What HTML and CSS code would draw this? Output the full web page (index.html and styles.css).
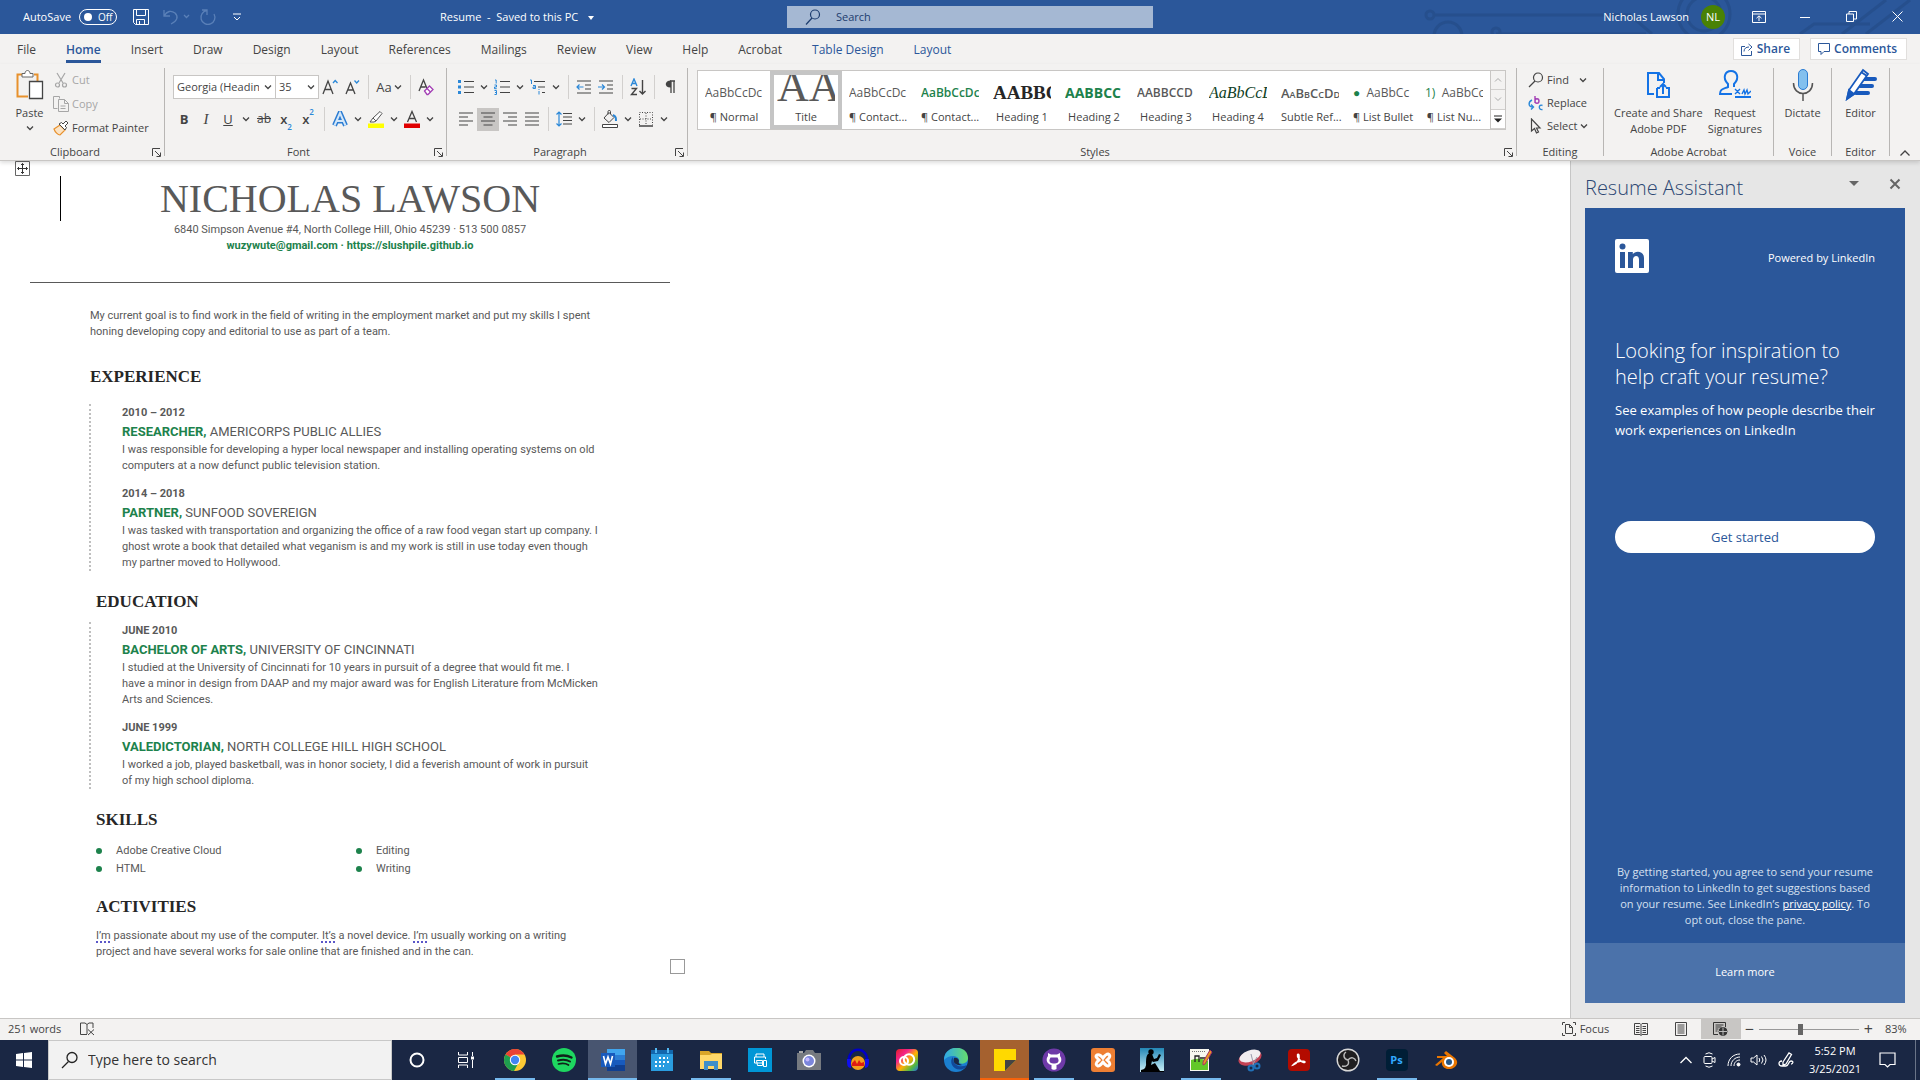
FILE: index.html
```html
<!DOCTYPE html>
<html lang="en">
<head>
<meta charset="utf-8">
<title>Resume - Word</title>
<link rel="stylesheet" href="styles.css">
</head>
<body>
<svg class="defs" aria-hidden="true">
  <symbol id="chev" viewBox="0 0 8 8"><path d="M1 2.500l3 3 3-3" fill="none" stroke="#444" stroke-width="1.300"/></symbol>
  <symbol id="launch" viewBox="0 0 9 9"><path d="M.5 8V.5H8M3 3l5 5M8.500 4.500v4h-4" fill="none" stroke="#444"/></symbol>
</svg>

<header class="titlebar">
  <svg class="circuit" viewBox="0 0 520 34" preserveAspectRatio="xMaxYMid slice" aria-hidden="true"><g fill="none" stroke="#244d88" stroke-width="3"><circle cx="30" cy="15" r="4"/><path d="M34 15h196l22 19M96 34h150M400 34l14-10h56M442 34l44-34M466 34l44-34"/><circle cx="48" cy="36" r="14"/><circle cx="96" cy="32" r="4"/><circle cx="304" cy="14" r="26"/><circle cx="304" cy="14" r="17"/></g></svg>
  <div class="tb-left">
    <label class="autosave">AutoSave <span class="toggle"><input type="checkbox"><span>Off</span></span></label>
    <button class="tbtn save" aria-label="Save"><svg width="18" height="18" viewBox="0 0 18 18" fill="none" stroke="#fff"><path d="M1.500 1.500h15v15h-13l-2-2zM4.500 1.500v6h9v-6M4.500 16.500v-5h8v5M7.500 13v3.500"/></svg></button>
    <button class="tbtn undo" aria-label="Undo"><svg width="28" height="18" viewBox="0 0 28 18" fill="none" stroke="#5a80b8" stroke-width="1.300"><path d="M2 2v6h6M2 8c3-5 7-6 11-3 4 4 2 8-4 11M22 7l2.500 2.500L27 7"/></svg></button>
    <button class="tbtn redo" aria-label="Repeat"><svg width="18" height="18" viewBox="0 0 18 18" fill="none" stroke="#5a80b8" stroke-width="1.300"><path d="M3 2h5v5M8 2.500A7 7 0 1 0 15 6"/></svg></button>
    <button class="tbtn more" aria-label="Customize Quick Access Toolbar"><svg width="8" height="8" viewBox="0 0 8 8" fill="none" stroke="#fff"><path d="M0 1h8M1 4l3 3 3-3"/></svg></button>
  </div>
  <button class="doc-name">Resume&nbsp; -&nbsp; Saved to this PC <span class="tri"></span></button>
  <div class="top-search">
    <svg width="18" height="18" viewBox="0 0 18 18" fill="none" stroke="#1d3c6e" stroke-width="1.200"><circle cx="11" cy="6.500" r="4.500"/><path d="M8 10l-6 6.500"/></svg>
    <input type="text" placeholder="Search" aria-label="Search">
  </div>
  <div class="tb-right">
    <span>Nicholas Lawson</span><span class="avatar">NL</span>
    <div class="win">
      <button aria-label="Ribbon display options"><svg width="14" height="12" viewBox="0 0 14 12" fill="none" stroke="#fff"><path d="M.5.5h13v11H.5zM.5 3h13M7 10V5M4.500 7.200L7 4.800l2.500 2.400"/></svg></button>
      <button aria-label="Minimize"><svg width="10" height="12" viewBox="0 0 10 12" stroke="#fff"><path d="M0 6.500h10"/></svg></button>
      <button aria-label="Restore"><svg width="11" height="11" viewBox="0 0 11 11" fill="none" stroke="#fff"><path d="M.5 3h7v7.500h-7zM3 3V.5h7.500V8h-3"/></svg></button>
      <button aria-label="Close"><svg width="11" height="11" viewBox="0 0 11 11" stroke="#fff"><path d="M.5.5l10 10M10.500.5l-10 10"/></svg></button>
    </div>
  </div>
</header>

<nav class="tabs">
  <button>File</button><button class="on">Home</button><button>Insert</button><button>Draw</button><button>Design</button><button>Layout</button><button>References</button><button>Mailings</button><button>Review</button><button>View</button><button>Help</button><button>Acrobat</button><button class="ctx">Table Design</button><button class="ctx">Layout</button>
  <div class="tab-actions">
    <button><svg width="12" height="13" viewBox="0 0 12 13" fill="none" stroke="#2b579a"><path d="M4 3.500H.5v9h10V8M3 8.500c0-3 2-4.500 5-4.500M7.500 1l3.500 3-3.500 3.500"/></svg>Share</button>
    <button><svg width="12" height="12" viewBox="0 0 12 12" fill="none" stroke="#2b579a"><path d="M.5.5h11v8H6l-3 3v-3H.5z"/></svg>Comments</button>
  </div>
</nav>

<section class="ribbon" aria-label="Ribbon">
  <div class="group g-clip">
    <div class="body">
      <button class="big"><svg width="30" height="32" viewBox="0 0 30 32"><path d="M7 5.500H2.500v22H13M19 5.500h3.500V12" fill="none" stroke="#e8912d" stroke-width="2"/><path d="M7 8V4.500h3C10 .5 15 .5 15 4.500h3V8z" fill="#fff" stroke="#666"/><path d="M14.500 12.500h13v17h-13z" fill="#fff" stroke="#444" stroke-width="1.300"/></svg><span>Paste</span><svg width="8" height="8"><use href="#chev"/></svg></button>
      <div class="list">
        <button class="off"><svg width="16" height="16" viewBox="0 0 16 16" fill="none" stroke="#a6a6a6" stroke-width="1.200"><path d="M4 1l6 10M12 1L6 11"/><circle cx="4.500" cy="13" r="2"/><circle cx="11.500" cy="13" r="2"/></svg>Cut</button>
        <button class="off"><svg width="16" height="16" viewBox="0 0 16 16" fill="none" stroke="#a6a6a6"><path d="M4.500 12.500h-4V.5h6v2M5.500 3.500h6l4 4v8h-10zM11.500 3.500v4h4M7.500 10h5M7.500 12.500h5"/></svg>Copy</button>
        <button><svg width="16" height="16" viewBox="0 0 16 16"><path d="M1 9l6-4 5 5-5 5c-2 0-5-3-6-6z" fill="#fbe3c4" stroke="#e8912d" stroke-width="1.200"/><path d="M6 4l6 6 1.500-2.500L12 6l3-3-2-2-3 3-1.500-1.500z" fill="#fff" stroke="#444"/></svg>Format Painter</button>
      </div>
    </div>
    <footer>Clipboard<svg width="9" height="9"><use href="#launch"/></svg></footer>
  </div>

  <div class="group g-font">
    <div class="rows">
      <div class="row">
        <span class="combo face"><select aria-label="Font"><option>Georgia (Headings)</option></select><svg width="8" height="8"><use href="#chev"/></svg></span>
        <span class="combo size"><select aria-label="Font size"><option>35</option></select><svg width="8" height="8"><use href="#chev"/></svg></span>
        <button class="ib" aria-label="Increase font size"><svg width="16" height="18" viewBox="0 0 16 18" fill="none" stroke="#444" stroke-width="1.300"><path d="M1 16L6 3l5 13M2.800 11.500h6.400"/><path d="M11 5l2.200-2.500L15.500 5" stroke="#2b88d8"/></svg></button>
        <button class="ib" aria-label="Decrease font size"><svg width="16" height="18" viewBox="0 0 16 18" fill="none" stroke="#444" stroke-width="1.300"><path d="M2 16L6.500 5 11 16M3.500 12h6"/><path d="M10.500 2.500L12.700 5 15 2.500" stroke="#2b88d8"/></svg></button>
        <i class="sep"></i>
        <button class="ib case">Aa<svg width="8" height="8"><use href="#chev"/></svg></button>
        <i class="sep"></i>
        <button class="ib" aria-label="Clear formatting"><svg width="16" height="18" viewBox="0 0 16 18" fill="none" stroke="#444" stroke-width="1.300"><path d="M1 13L5.500 2 10 13M2.500 9h5"/><path d="M6.500 13l5-5 3.500 3.500-5 5H9z" fill="#fff" stroke="#a33fb5"/><path d="M9 10.500l3.500 3.500" stroke="#a33fb5"/></svg></button>
      </div>
      <div class="row">
        <button class="ib b">B</button><button class="ib it">I</button><button class="ib u">U</button><button class="cv" aria-label="Underline style"><svg width="8" height="8"><use href="#chev"/></svg></button>
        <button class="ib st">ab</button><button class="ib xx">x<sub>2</sub></button><button class="ib xx">x<sup>2</sup></button>
        <i class="sep"></i>
        <button class="ib" aria-label="Text effects"><svg width="16" height="16" viewBox="0 0 16 16"><path d="M2.500 14.500L8 2l5.500 12.500M4.500 10h7" fill="none" stroke="#2b7cd3" stroke-width="5"/><path d="M2.500 14.500L8 2l5.500 12.500M4.500 10h7" fill="none" stroke="#d4e7f8" stroke-width="2"/></svg></button><button class="cv" aria-label="Text effects menu"><svg width="8" height="8"><use href="#chev"/></svg></button>
        <button class="ib" aria-label="Highlight"><svg width="18" height="18" viewBox="0 0 18 18"><path d="M6 8l7-6.500 2 2L9 11zM6 8l-3 4h4l2-1" fill="#fff" stroke="#555"/><path d="M1 13.500h16V18H1z" fill="#ff0"/></svg></button><button class="cv" aria-label="Highlight colors"><svg width="8" height="8"><use href="#chev"/></svg></button>
        <button class="ib" aria-label="Font color"><svg width="18" height="18" viewBox="0 0 18 18"><path d="M4.500 12L9 1.500 13.500 12M6 8.500h6" fill="none" stroke="#444" stroke-width="1.300"/><path d="M1 13.500h16V18H1z" fill="#e00000"/></svg></button><button class="cv" aria-label="Font colors"><svg width="8" height="8"><use href="#chev"/></svg></button>
      </div>
    </div>
    <footer>Font<svg width="9" height="9"><use href="#launch"/></svg></footer>
  </div>

  <div class="group g-para">
    <div class="rows">
      <div class="row">
        <button class="ib" aria-label="Bullets"><svg width="16" height="16" viewBox="0 0 16 16"><path d="M6 2.500h10M6 8h10M6 13.500h10" stroke="#444" stroke-width="1.200"/><path d="M0 1h3v3H0zM0 6.500h3v3H0zM0 12h3v3H0z" fill="#2b88d8"/></svg></button><button class="cv" aria-label="Bullet library"><svg width="8" height="8"><use href="#chev"/></svg></button>
        <button class="ib" aria-label="Numbering"><svg width="16" height="16" viewBox="0 0 16 16" fill="none"><path d="M6 2.500h10M6 8h10M6 13.500h10" stroke="#444" stroke-width="1.200"/><path d="M1 1h1.200v3.500M.5 6h2v2h-2v1.700h2.200M.5 11.500h2v4h-2M1 13.500h1.500" stroke="#2b88d8"/></svg></button><button class="cv" aria-label="Numbering library"><svg width="8" height="8"><use href="#chev"/></svg></button>
        <button class="ib" aria-label="Multilevel list"><svg width="16" height="16" viewBox="0 0 16 16" fill="none"><path d="M4 2.500h11M8 8h7M12 13.500h3" stroke="#444" stroke-width="1.200"/><path d="M0 1h1.500v4M3 6.500h2.500v3H3v-1.500h2.500M9 12v3.500M9 10v1" stroke="#2b88d8"/></svg></button><button class="cv" aria-label="Multilevel library"><svg width="8" height="8"><use href="#chev"/></svg></button>
        <i class="sep"></i>
        <button class="ib" aria-label="Decrease indent"><svg width="16" height="14" viewBox="0 0 16 14" fill="none" stroke="#444" stroke-width="1.200"><path d="M1 1h14M9 5h6M9 9h6M1 13h14"/><path d="M7.500 7H1M3.500 4.500L1 7l2.500 2.500" stroke="#2b88d8"/></svg></button>
        <button class="ib" aria-label="Increase indent"><svg width="16" height="14" viewBox="0 0 16 14" fill="none" stroke="#444" stroke-width="1.200"><path d="M1 1h14M9 5h6M9 9h6M1 13h14"/><path d="M0 7h6.500M4 4.500L6.500 7 4 9.500" stroke="#2b88d8"/></svg></button>
        <i class="sep"></i>
        <button class="ib" aria-label="Sort"><svg width="16" height="18" viewBox="0 0 16 18" fill="none" stroke-width="1.400"><path d="M1 8l3-7 3 7M2 5.500h4" stroke="#2b88d8"/><path d="M1.500 10.500h5l-5 6H7M12.500 2v14M9.500 13l3 3 3-3" stroke="#444"/></svg></button>
        <i class="sep"></i>
        <button class="ib" aria-label="Show marks"><svg width="12" height="14" viewBox="0 0 12 14"><path d="M6 1h5M7 1v12M10 1v12" stroke="#444" stroke-width="1.300"/><path d="M7 .5v7C0 8 0 .5 7 .5z" fill="#444"/></svg></button>
      </div>
      <div class="row">
        <button class="ib" aria-label="Align left"><svg width="14" height="14" viewBox="0 0 14 14" stroke="#444" stroke-width="1.200"><path d="M0 1h14M0 5h9M0 9h14M0 13h9"/></svg></button>
        <button class="ib sel" aria-label="Center"><svg width="14" height="14" viewBox="0 0 14 14" stroke="#444" stroke-width="1.200"><path d="M0 1h14M2.500 5h9M0 9h14M2.500 13h9"/></svg></button>
        <button class="ib" aria-label="Align right"><svg width="14" height="14" viewBox="0 0 14 14" stroke="#444" stroke-width="1.200"><path d="M0 1h14M5 5h9M0 9h14M5 13h9"/></svg></button>
        <button class="ib" aria-label="Justify"><svg width="14" height="14" viewBox="0 0 14 14" stroke="#444" stroke-width="1.200"><path d="M0 1h14M0 5h14M0 9h14M0 13h14"/></svg></button>
        <i class="sep"></i>
        <button class="ib" aria-label="Line spacing"><svg width="16" height="16" viewBox="0 0 16 16" fill="none" stroke="#444" stroke-width="1.200"><path d="M7 2.500h9M7 6h9M7 9.500h9M7 13h9"/><path d="M3 1v14M.5 3.500L3 1l2.500 2.500M.5 12.500L3 15l2.500-2.500" stroke="#2b88d8"/></svg></button><button class="cv" aria-label="Line spacing menu"><svg width="8" height="8"><use href="#chev"/></svg></button>
        <i class="sep"></i>
        <button class="ib" aria-label="Shading"><svg width="18" height="18" viewBox="0 0 18 18" fill="none" stroke="#444"><path d="M3 8l5-5.500 5 5-5 5zM7 4.500V1.500c0-1.500 2.500-1.500 2.500 0V4"/><path d="M12 5c3 1 3 3 3 6" stroke="#2b88d8" stroke-width="2"/><path d="M1.500 14.500h15v3h-15z" fill="#fff"/></svg></button><button class="cv" aria-label="Shading colors"><svg width="8" height="8"><use href="#chev"/></svg></button>
        <button class="ib" aria-label="Borders"><svg width="16" height="16" viewBox="0 0 16 16" fill="none" stroke="#444"><path d="M1.500 14V1.500h13V14M8 2v12M2 8h12" stroke-dasharray="1 1.500"/><path d="M1 15h14" stroke-width="1.500"/></svg></button><button class="cv" aria-label="Border menu"><svg width="8" height="8"><use href="#chev"/></svg></button>
      </div>
    </div>
    <footer>Paragraph<svg width="9" height="9"><use href="#launch"/></svg></footer>
  </div>

  <div class="group g-styles">
    <div class="gallery">
      <button><b class="s-n">AaBbCcDc</b><span>¶ Normal</span></button>
      <button class="cur"><b class="s-t">AA</b><span>Title</span></button>
      <button><b class="s-n">AaBbCcDc</b><span>¶ Contact...</span></button>
      <button><b class="s-g">AaBbCcDc</b><span>¶ Contact...</span></button>
      <button><b class="s-h1">AABBC</b><span>Heading 1</span></button>
      <button><b class="s-h2">AABBCC</b><span>Heading 2</span></button>
      <button><b class="s-h3">AABBCCD</b><span>Heading 3</span></button>
      <button><b class="s-h4">AaBbCcL</b><span>Heading 4</span></button>
      <button><b class="s-sr">AaBbCcDd</b><span>Subtle Ref...</span></button>
      <button><b class="s-n"><em>●</em>&nbsp; AaBbCc</b><span>¶ List Bullet</span></button>
      <button><b class="s-n"><em>1)</em>&nbsp; AaBbCc</b><span>¶ List Nu...</span></button>
      <div class="gscroll">
        <button aria-label="Row up" class="dim"><svg width="8" height="8" viewBox="0 0 8 8"><path d="M1 5.500l3-3 3 3" fill="none" stroke="#aaa"/></svg></button>
        <button aria-label="Row down" class="dim"><svg width="8" height="8" viewBox="0 0 8 8"><path d="M1 2.500l3 3 3-3" fill="none" stroke="#aaa"/></svg></button>
        <button aria-label="More styles"><svg width="8" height="8" viewBox="0 0 8 8"><path d="M0 1h8" stroke="#222"/><path d="M0 3.500h8L4 7.500z" fill="#222"/></svg></button>
      </div>
    </div>
    <footer>Styles<svg width="9" height="9"><use href="#launch"/></svg></footer>
  </div>

  <div class="group g-edit">
    <div class="list">
      <button><svg width="16" height="16" viewBox="0 0 16 16" fill="none" stroke="#444" stroke-width="1.200"><circle cx="10" cy="5.500" r="4.500"/><path d="M7 9l-6 6"/></svg>Find<svg class="far" width="8" height="8"><use href="#chev"/></svg></button>
      <button><svg width="16" height="16" viewBox="0 0 16 16" fill="none" stroke-width="1.400"><path d="M7 1v7M7 6c0-3 4-3 4 0s-4 3-4 0" stroke="#a33fb5"/><path d="M14.500 10.500c-4-2-4.500 5 0 4M4 5c-4 2-4 7 1 7M3 9.500L5.500 12 3 14.500" stroke="#2b88d8"/></svg>Replace</button>
      <button><svg width="16" height="16" viewBox="0 0 16 16"><path d="M3.500 1v12l3-2.500L8.500 15l2-1-2-4H12z" fill="none" stroke="#444" stroke-width="1.200"/></svg>Select<svg width="8" height="8"><use href="#chev"/></svg></button>
    </div>
    <footer>Editing</footer>
  </div>

  <div class="group g-acro">
    <div class="body">
      <button class="big"><svg width="30" height="32" viewBox="0 0 30 32" fill="none" stroke="#1473e6" stroke-width="2"><path d="M11 25H5V4h11l5 6v4M15 4v7h6M14 19v9h12v-9h-3M14 19h3M20 25v-10M17 18l3-3 3 3"/></svg><span>Create and Share<br>Adobe PDF</span></button>
      <button class="big"><svg width="32" height="32" viewBox="0 0 32 32" fill="none" stroke="#1473e6" stroke-width="2"><path d="M13 25H1c0-5 3-5 8-7v-3C3 9 6 2 12 2s9 7 3 13v3M16 28h16"/><path d="M16 20l5 5M21 20l-5 5M23 25l2-4 1 4 2-4 1 4 3-3" stroke-width="1.400"/></svg><span>Request<br>Signatures</span></button>
    </div>
    <footer>Adobe Acrobat</footer>
  </div>
  <div class="group g-one">
    <div class="body"><button class="big"><svg width="22" height="34" viewBox="0 0 22 34" fill="none"><rect x="6.500" y="1.500" width="9" height="20" rx="4.500" fill="#83c0ee" stroke="#2b7cd3"/><path d="M1.500 15c0 14 19 14 19 0M11 26v7" stroke="#555" stroke-width="1.500"/></svg><span>Dictate</span></button></div>
    <footer>Voice</footer>
  </div>
  <div class="group g-one">
    <div class="body"><button class="big"><svg width="32" height="34" viewBox="0 0 32 34"><path d="M18 11h12M15 18h12M11 25h12" stroke="#185abd" stroke-width="4" stroke-linecap="round"/><path d="M2 31l2-9L18 2l5 4L9 26z" fill="#fff" stroke="#185abd" stroke-width="1.800"/><path d="M2 31l2-9 5 4zM16 4l6 4" fill="#185abd" stroke="#185abd" stroke-width="1.800"/></svg><span>Editor</span></button></div>
    <footer>Editor</footer>
  </div>
  <button class="collapse" aria-label="Collapse the ribbon"><svg width="10" height="8" viewBox="0 0 10 8"><path d="M.5 6.500L5 2l4.500 4.500" fill="none" stroke="#444" stroke-width="1.300"/></svg></button>
</section>

<main class="work">
  <article class="doc">
    <svg class="move" width="15" height="15" viewBox="0 0 15 15" fill="none" stroke="#666"><path d="M.5.5h14v14H.5z" fill="#fff"/><path d="M7.500 2.500v10M2.500 7.500h10M6 4l1.500-1.500L9 4M6 11l1.500 1.500L9 11M4 6L2.500 7.500 4 9M11 6l1.500 1.500L11 9" stroke="#333"/></svg>
    <i class="cursor"></i>
    <div class="sheet">
      <header>
        <h1>NICHOLAS LAWSON</h1>
        <p>6840 Simpson Avenue #4, North College Hill, Ohio 45239 · 513 500 0857</p>
        <p class="mail">wuzywute@gmail.com · https://slushpile.github.io</p>
      </header>
      <p class="goal">My current goal is to find work in the field of writing in the employment market and put my skills I spent<br>honing developing copy and editorial to use as part of a team.</p>
      <h2 class="exp">EXPERIENCE</h2>
      <div class="line">
        <section><h4>2010 – 2012</h4><h3><b>RESEARCHER,</b> AMERICORPS PUBLIC ALLIES</h3><p>I was responsible for developing a hyper local newspaper and installing operating systems on old<br>computers at a now defunct public television station.</p></section>
        <section><h4>2014 – 2018</h4><h3><b>PARTNER,</b> SUNFOOD SOVEREIGN</h3><p>I was tasked with transportation and organizing the office of a raw food vegan start up company. I<br>ghost wrote a book that detailed what veganism is and my work is still in use today even though<br>my partner moved to Hollywood.</p></section>
      </div>
      <h2>EDUCATION</h2>
      <div class="line edu">
        <section><h4>JUNE 2010</h4><h3><b>BACHELOR OF ARTS,</b> UNIVERSITY OF CINCINNATI</h3><p>I studied at the University of Cincinnati for 10 years in pursuit of a degree that would fit me. I<br>have a minor in design from DAAP and my major award was for English Literature from McMicken<br>Arts and Sciences.</p></section>
        <section><h4>JUNE 1999</h4><h3><b>VALEDICTORIAN,</b> NORTH COLLEGE HILL HIGH SCHOOL</h3><p>I worked a job, played basketball, was in honor society, I did a feverish amount of work in pursuit<br>of my high school diploma.</p></section>
      </div>
      <h2>SKILLS</h2>
      <ul><li>Adobe Creative Cloud</li><li>Editing</li><li>HTML</li><li>Writing</li></ul>
      <h2 class="act">ACTIVITIES</h2>
      <p class="about"><u>I’m</u> passionate about my use of the computer. <u>It’s</u> a novel device. <u>I’m</u> usually working on a writing<br>project and have several works for sale online that are finished and in the can.</p>
      <i class="grip"></i>
    </div>
  </article>
  <aside class="pane">
    <div class="pane-head"><h2>Resume Assistant</h2><button aria-label="Pane options"><span class="tri"></span></button><button aria-label="Close pane"><svg width="12" height="12" viewBox="0 0 12 12" stroke="#666" stroke-width="2"><path d="M1.500 1.500l9 9M10.500 1.500l-9 9"/></svg></button></div>
    <div class="card">
      <div class="brand"><svg width="34" height="34" viewBox="0 0 34 34" aria-label="LinkedIn"><rect width="34" height="34" rx="2" fill="#fff"/><g fill="#2b579a"><circle cx="7.500" cy="7.500" r="3"/><path d="M5 13h5v16H5zM13 13h4.800v2.200c2-3.700 11.200-4 11.200 4V29h-5v-8.500c0-5-6-4.500-6 0V29h-5z"/></g></svg><span>Powered by LinkedIn</span></div>
      <h3>Looking for inspiration to help craft your resume?</h3>
      <p class="lead">See examples of how people describe their work experiences on LinkedIn</p>
      <button class="start">Get started</button>
      <p class="terms">By getting started, you agree to send your resume information to LinkedIn to get suggestions based on your resume. See LinkedIn’s <a href="#">privacy policy</a>. To opt out, close the pane.</p>
      <button class="learn">Learn more</button>
    </div>
  </aside>
</main>

<div class="status">
  <span>251 words</span>
  <svg width="15" height="14" viewBox="0 0 15 14" fill="none" stroke="#444"><path d="M7 12.500H.5V1H5l2 1.500V12M7 2.500L9 1h4v5M8 7.500l6 5.500M14 7.500L8 13"/></svg>
  <div class="views">
    <button class="focus"><svg width="14" height="14" viewBox="0 0 14 14" fill="none" stroke="#444"><path d="M3 .5H.5V3M11 .5h2.500V3M.5 11v2.500H3M13.500 11v2.500H11M3.500 2.500h4l3 3v6h-7zM7.500 2.500v3h3"/></svg>Focus</button>
    <button aria-label="Read mode"><svg width="14" height="13" viewBox="0 0 14 13" fill="none" stroke="#444"><path d="M.5.5H6l1 1 1-1h5.500v11H8l-1 1-1-1H.5zM7 1.500v11M2 3.500h3.500M2 5.500h3.500M2 7.500h3.500M2 9.500h3.500M8.500 3.500H12M8.500 5.500H12M8.500 7.500H12M8.500 9.500H12"/></svg></button>
    <button aria-label="Print layout"><svg width="12" height="14" viewBox="0 0 12 14" fill="none" stroke="#444"><path d="M.5.5h11v13H.5zM2.500 3h7M2.500 5h7M2.500 7h7M2.500 9h7M2.500 11h7"/></svg></button>
    <button class="sel" aria-label="Web layout"><svg width="15" height="14" viewBox="0 0 15 14" fill="none" stroke="#333"><path d="M5 12.500H.5V.5h12V5M2.500 3h8M2.500 5h6M2.500 7h3M2.500 9h2"/><circle cx="10" cy="9.500" r="4" fill="#333"/><path d="M6 9.500h8M10 5.500v8" stroke="#bbb"/></svg></button>
    <span class="zoom"><span>−</span><input type="range" min="10" max="230" value="101" aria-label="Zoom"><span>+</span></span>
    <span class="pct">83%</span>
  </div>
</div>

<div class="taskbar">
  <button class="startbtn" aria-label="Start"><svg width="16" height="16" viewBox="0 0 16 16" fill="#fff"><path d="M0 2l7-1v6.500H0zM8 .9L16 0v7.500H8zM0 8.500h7V15l-7-1zM8 8.500h8V16l-8-1z"/></svg></button>
  <div class="tsearch"><svg width="18" height="18" viewBox="0 0 18 18" fill="none" stroke="#222" stroke-width="1.300"><circle cx="11" cy="6.500" r="5"/><path d="M7.500 10.500L1 17"/></svg><input type="text" placeholder="Type here to search" aria-label="Type here to search"></div>
  <div class="apps">
    <button aria-label="Cortana"><svg width="24" height="24" viewBox="0 0 24 24"><circle cx="12" cy="12" r="6.500" fill="none" stroke="#fff" stroke-width="2"/></svg></button>
    <button aria-label="Task view"><svg width="24" height="24" viewBox="0 0 24 24" fill="none" stroke="#fff"><path d="M4.500 4v3h9V4M4.500 20v-3h9v3M4.500 9.500h9v5h-9zM18.500 4v4M18.500 12v8"/><path d="M17 8.500h3v3h-3z" fill="#fff" stroke="none"/></svg></button>
    <button class="run" aria-label="Chrome"><svg width="24" height="24" viewBox="0 0 24 24"><circle cx="12" cy="12" r="11" fill="#fcc934"/><path d="M12 12L2.500 6.500A11 11 0 0 1 21.500 6.500H12z" fill="#ea4335"/><path d="M2.500 6.500A11 11 0 0 0 11 23l5-9-4-2z" fill="#1e9e4f"/><circle cx="12" cy="12" r="5.200" fill="#fff"/><circle cx="12" cy="12" r="4.200" fill="#4285f4"/></svg></button>
    <button aria-label="Spotify"><svg width="24" height="24" viewBox="0 0 24 24" fill="none" stroke="#10231a" stroke-linecap="round"><circle cx="12" cy="12" r="12" fill="#1ed760" stroke="none"/><path d="M5 8.500q8-2.500 14.500 1" stroke-width="2.400"/><path d="M6 12.500q7-2 12 1" stroke-width="2"/><path d="M6.500 16q6-1.500 10 1" stroke-width="1.700"/></svg></button>
    <button class="active" aria-label="Word"><svg width="24" height="24" viewBox="0 0 24 24"><path d="M6 1h18v6H6z" fill="#41a5ee"/><path d="M6 7h18v5H6z" fill="#2b7cd3"/><path d="M6 12h18v5H6z" fill="#185abd"/><path d="M6 17h18v6H6z" fill="#103f91"/><path d="M0 5h14v14H0z" fill="#185abd"/><path d="M2.500 8l2 8L7 9l2.500 7 2-8" fill="none" stroke="#fff" stroke-width="1.600"/></svg></button>
    <button aria-label="Calendar"><svg width="24" height="24" viewBox="0 0 24 24"><path d="M1 2h22v21H1z" fill="#2a9de0"/><path d="M1 2h22v4H1z" fill="#1267ad"/><path d="M5 0h2v5H5zM17 0h2v5h-2z" fill="#52b7f2"/><path d="M9 10h9M5 14h14M5 18h9" stroke="#fff" stroke-width="2" stroke-dasharray="2 2"/></svg></button>
    <button class="run" aria-label="File Explorer"><svg width="24" height="24" viewBox="0 0 24 24"><path d="M1 3h9l2 2h11v6H1z" fill="#d9a528"/><path d="M1 7h10l2-1h10v15H1z" fill="#ffd869"/><path d="M5 13h14v9h-4v-4H9v4H5z" fill="#3f8fc9"/></svg></button>
    <button aria-label="Printer"><svg width="24" height="24" viewBox="0 0 24 24" fill="none" stroke="#fff"><path d="M0 0h24v24H0z" fill="#0096d6" stroke="none"/><path d="M8 9V6h8v3M14 15H6.500V9h11v2M8.500 12.500h6v5h-5zM15.500 12.500h3v6h-3z"/></svg></button>
    <button aria-label="Camera"><svg width="24" height="24" viewBox="0 0 24 24"><path d="M0 5h7l2-3h7l2 3h6v17H0z" fill="#767a80"/><path d="M2 3h4v2H2z" fill="#aaa"/><circle cx="12" cy="13" r="6.500" fill="#fff"/><circle cx="12" cy="13" r="5" fill="#7b86dc"/><circle cx="10.500" cy="11.500" r="2" fill="#c4b7ff"/></svg></button>
    <button aria-label="Audacity"><svg width="24" height="24" viewBox="0 0 24 24"><circle cx="12" cy="15" r="7" fill="#f2a01d"/><path d="M6 15l3-3 2 4 2-4 2 3 3-1v4H6z" fill="#df1c12"/><path d="M3 16C0-3 24-3 21 16" fill="none" stroke="#0000c8" stroke-width="2.500"/><path d="M1 11h4v9c-4 0-4-4-4-9zM23 11h-4v9c4 0 4-4 4-9z" fill="#1010ee"/></svg></button>
    <button aria-label="Creative Cloud"><svg width="24" height="24" viewBox="0 0 24 24" fill="none"><defs><linearGradient id="cc" x1="0" y1="0" x2="1" y2="1"><stop stop-color="#e21f27"/><stop offset=".3" stop-color="#f4248c"/><stop offset=".55" stop-color="#ffb400"/><stop offset=".8" stop-color="#4bb749"/><stop offset="1" stop-color="#2b6de8"/></linearGradient></defs><rect x="1" y="1" width="22" height="22" rx="4" fill="url(#cc)"/><circle cx="9" cy="13" r="4" stroke="#fff" stroke-width="2"/><circle cx="14" cy="11.500" r="5.200" stroke="#fff" stroke-width="2"/></svg></button>
    <button aria-label="Edge"><svg width="24" height="24" viewBox="0 0 24 24"><defs><linearGradient id="eg"><stop stop-color="#2fa8e8"/><stop offset="1" stop-color="#66dc6c"/></linearGradient></defs><circle cx="12" cy="12" r="12" fill="#1b7fd0"/><path d="M0 12C0-4 24-4 24 10c0 6-8 7-9 4 2-6-9-9-15-2z" fill="url(#eg)"/><path d="M9 9c-5 5 1 15 10 12 2-1 3-2 4-4-6 3-15 1-14-8z" fill="#11489a"/><path d="M10 10c-2 5 3 8 8 7-3-1-4-2-3-4 0-3-4-4-5-3z" fill="#1b2745"/></svg></button>
    <button class="alert" aria-label="Sticky Notes"><svg width="24" height="24" viewBox="0 0 24 24"><path d="M1 1h22v11L12 23H1z" fill="#ffd900"/><path d="M12 12h11L12 23z" fill="#444"/></svg></button>
    <button class="run" aria-label="GitHub Desktop"><svg width="24" height="24" viewBox="0 0 24 24"><circle cx="12" cy="12" r="11.500" fill="#6e3aa8"/><path d="M9.500 21v-4c-5-1-6-6-3.500-9V5l3 1.500h6L18 5v3c2.500 3 1.500 8-3.500 9v4c-1 1-4 1-5 0z" fill="#fff"/><path d="M8.500 9.500h7c3 5-1 6-3.500 6s-6.500-1-3.500-6z" fill="#6e3aa8"/></svg></button>
    <button aria-label="XAMPP"><svg width="24" height="24" viewBox="0 0 24 24" fill="none"><rect width="24" height="24" rx="3" fill="#ee7f33"/><path d="M6 7q-2 1 0 3l2 2-2 2q-2 3 1 4 2 0 5-4 3 4 5 4 3-1 1-4l-2-2 2-2q2-3-1-4-2 0-5 4Q9 6 6 7z" stroke="#fff" stroke-width="3"/></svg></button>
    <button aria-label="Kindle"><svg width="24" height="24" viewBox="0 0 24 24"><defs><linearGradient id="kd" x2="0" y2="1"><stop stop-color="#2387b5"/><stop offset="1" stop-color="#cdf0f7"/></linearGradient></defs><path d="M0 0h24v24H0z" fill="url(#kd)"/><circle cx="11" cy="4" r="2.700"/><path d="M8 6h4l2 5 3-1 2-4 2 1-3 6-5 1-1-1-1 4 4-2 5 8h4v1H1v-2q6-1 5-8 0-6 2-8z"/></svg></button>
    <button class="run" aria-label="Notepad++"><svg width="24" height="24" viewBox="0 0 24 24"><path d="M1 1h19v22H1z" fill="#f8f8f0"/><path d="M2 12q9-3 17 1v9H2z" fill="#62c829"/><path d="M3 3.500h13" stroke="#777" stroke-dasharray="1 1"/><path d="M6 14V8h4v6M11 10h3M14 10h3" stroke="#222" stroke-width="1.300" fill="none"/><path d="M21 2l2 2-7 12-2 1 0-3z" fill="#e99a1f" stroke="#a36"/></svg></button>
    <button aria-label="Snipping Tool"><svg width="24" height="24" viewBox="0 0 24 24" fill="none"><ellipse cx="12" cy="10" rx="12" ry="7" transform="rotate(-20 12 10)" fill="#c34254"/><ellipse cx="12" cy="8" rx="11" ry="5.500" transform="rotate(-20 12 8)" fill="#f1edf0"/><path d="M13 6l3 12M19 9l-5 9" stroke="#99a"/><circle cx="13" cy="20" r="2.500" stroke="#2171b8" stroke-width="2"/><circle cx="19" cy="18" r="2.500" stroke="#2171b8" stroke-width="2"/></svg></button>
    <button aria-label="Adobe Acrobat"><svg width="24" height="24" viewBox="0 0 24 24"><rect x="1" y="1" width="22" height="22" rx="4" fill="#b30b00"/><path d="M6 17c4-1 7-6 6-10-1-2-3 0 0 4s6 4 6 3-8-2-12 3z" fill="none" stroke="#fff" stroke-width="1.500"/></svg></button>
    <button aria-label="OBS Studio"><svg width="24" height="24" viewBox="0 0 24 24"><circle cx="12" cy="12" r="10.800" fill="#1f1e20" stroke="#d8d8d8" stroke-width="1.400"/><path d="M12 12c-5-1-5-6-2-8M12 12c3-4 7-2 8 1M12 12c2 5-2 7-6 6" fill="none" stroke="#bbb" stroke-width="1.400"/></svg></button>
    <button class="run" aria-label="Photoshop"><span class="ps">Ps</span></button>
    <button aria-label="Blender"><svg width="24" height="24" viewBox="0 0 24 24"><path d="M1 17l8-7H3V8h10L10 5l2-2 9 7c6 6-2 12-7 11-3 0-7-3-6-7l-5 4z" fill="#ea7600"/><circle cx="15" cy="14" r="5" fill="#fff"/><circle cx="15" cy="14" r="3" fill="#265787"/></svg></button>
  </div>
  <div class="tray">
    <button aria-label="Hidden icons"><svg width="12" height="8" viewBox="0 0 12 8" fill="none" stroke="#fff" stroke-width="1.300"><path d="M.5 7L6 1.500 11.500 7"/></svg></button>
    <button aria-label="Meet now"><svg width="14" height="16" viewBox="0 0 14 16" fill="none" stroke="#fff"><rect x="1" y="4.500" width="8" height="7" rx="1"/><path d="M9 7l3-1.500v5L9 9M2.500 2q3.500-2.500 7 0M2.500 14q3.500 2.500 7 0"/></svg></button>
    <button aria-label="Network"><svg width="14" height="14" viewBox="0 0 14 14" fill="none" stroke="#fff"><path d="M1 13C1 6 6 1 13 1M4 13c0-5 4-9 9-9M7 13c0-3.500 2.500-6 6-6"/><circle cx="11.500" cy="11.500" r="1.500" fill="#fff"/></svg></button>
    <button aria-label="Volume"><svg width="17" height="14" viewBox="0 0 17 14" fill="none" stroke="#fff"><path d="M1 5h2.500L7 2v10L3.500 9H1zM9 5q1.500 2 0 4M11.500 3.500q3 3.500 0 7M14 2q4 5 0 10"/></svg></button>
    <button class="wide" aria-label="Windows Ink"><svg width="17" height="16" viewBox="0 0 17 16" fill="none" stroke="#fff" stroke-width="1.300"><path d="M5 10L11 1l2.500 1.500L8 12l-3 1zM4 9c-4 0-4 5 0 5h4c3 0 2-5 5-5s2 3 0 3"/></svg></button>
    <div class="clock">5:52 PM<br>3/25/2021</div>
    <button class="note" aria-label="Notifications"><svg width="17" height="17" viewBox="0 0 17 17" fill="none" stroke="#fff" stroke-width="1.200"><path d="M1 1h15v11.500h-5L8.500 15 6 12.500H1z"/></svg></button>
    <i class="desk"></i>
  </div>
</div>
</body>
</html>
```
FILE: styles.css
```css
* { box-sizing: border-box; }
body {
  margin: 0;
  min-height: 100vh;
  display: flex;
  flex-direction: column;
  font: 11px/16px "Open Sans", "Noto Sans", sans-serif;
  color: #444;
  background: #fff;
  overflow: hidden;
}
h1, h2, h3, h4, p, ul { margin: 0; padding: 0; font-weight: 400; }
button { border: 0; padding: 0; background: none; font: inherit; color: inherit; }
button, nav, footer { white-space: nowrap; }
input, select { font: inherit; color: inherit; border: 0; background: none; padding: 0; margin: 0; min-width: 0; outline: 0; }
svg { display: block; flex: none; }
.defs { position: absolute; width: 0; height: 0; }
.tri { display: inline-block; border: 3px solid transparent; border-top: 4px solid currentColor; border-bottom: 0; vertical-align: middle; }

/* title bar */
.titlebar { position: relative; height: 34px; display: flex; align-items: center; background: #2b579a; color: #fff; }
.circuit { position: absolute; right: 0; top: 0; width: 520px; height: 34px; opacity: .7; }
.tb-left { width: 440px; display: flex; align-items: center; padding-left: 23px; }
.autosave { display: flex; align-items: center; gap: 8px; width: 109px; }
.toggle { display: flex; align-items: center; gap: 6px; width: 38px; height: 16px; padding-left: 4px; border: 1px solid #fff; border-radius: 8px; font-size: 10px; }
.toggle input { appearance: none; width: 8px; height: 8px; border-radius: 50%; background: #fff; }
.save { width: 30px; }
.undo { width: 37px; }
.redo { width: 34px; }
.doc-name { width: 347px; text-align: left; }
.doc-name .tri { margin-left: 7px; }
.top-search { width: 366px; height: 22px; display: flex; align-items: center; gap: 14px; padding-left: 17px; background: #a5b8d3; color: #1d3c6e; }
.top-search input { flex: 1; }
::placeholder { color: inherit; opacity: 1; }
.tb-right { position: relative; margin-left: auto; display: flex; align-items: center; }
.avatar { width: 24px; height: 24px; margin-left: 12px; border-radius: 50%; background: #498205; text-align: center; line-height: 24px; }
.win { display: flex; margin-left: 11px; }
.win button { width: 46px; display: flex; justify-content: center; }

/* tabs */
.tabs { height: 30px; padding: 0 13px 0 17px; display: flex; align-items: center; gap: 30px; background: #f3f2f1; font-size: 12px; }
.tabs > button { height: 28px; padding-top: 4px; border-bottom: 3px solid transparent; }
.tabs .on { border-color: #2b579a; font-weight: 600; color: #2b579a; }
.tabs .ctx { color: #2b579a; }
.tab-actions { margin-left: auto; display: flex; gap: 10px; }
.tab-actions button { height: 22px; padding: 0 9px 0 7px; display: flex; align-items: center; gap: 4px; background: #fff; border: 1px solid #e1dfdd; color: #2b579a; font-weight: 600; }

/* ribbon */
.ribbon { position: relative; z-index: 1; height: 97px; padding-top: 4px; display: flex; background: #f3f2f1; border-bottom: 1px solid #c8c6c4; box-shadow: 0 2px 4px #0002; }
.group { height: 88px; display: flex; flex-direction: column; border-right: 1px solid #b8b6b4; }
.group footer { position: relative; height: 16px; margin-top: auto; margin-bottom: -4px; padding-right: 14px; text-align: center; }
.group footer svg { position: absolute; right: 3px; top: 4px; }
.g-clip { width: 165px; }
.g-font { width: 282px; }
.g-para { width: 241px; }
.g-styles { flex: 1; min-width: 0; }
.g-edit { width: 87px; }
.g-acro { width: 170px; }
.g-one { width: 58px; }
.group.g-edit footer, .group.g-acro footer, .group.g-one footer { padding: 0; }
.body { display: flex; }
.big { display: flex; flex-direction: column; align-items: center; flex: 1; }
.big span { margin-top: 3px; }
.big > svg:first-child { height: 34px; }
.g-clip .big { flex: none; width: 59px; }
.g-clip .big > svg:last-child { margin-top: 3px; }
.g-acro .body { padding: 0 11px 0 10px; justify-content: space-between; }
.g-acro .big { flex: none; }
.list { display: flex; flex-direction: column; }
.list button { height: 24px; display: flex; align-items: center; gap: 3px; }
.g-clip .list { margin-left: -6px; }
.g-edit .list { padding-left: 11px; }
.g-edit .list button { height: 23px; }
.list .far { margin-left: 7px; }
.off { color: #a6a6a6; }

.rows { padding: 3px 0 0 8px; }
.row { height: 32px; display: flex; align-items: center; }
.combo { position: relative; height: 24px; background: #fff; border: 1px solid #c8c6c4; }
.combo select { appearance: none; width: 100%; height: 22px; padding: 0 16px 0 3px; overflow: hidden; }
.combo svg { position: absolute; right: 3px; top: 7px; }
.face { width: 103px; }
.size { width: 43px; border-left: 0; }
.ib { width: 22px; height: 23px; display: flex; align-items: center; justify-content: center; font-size: 13px; }
.cv { width: 14px; height: 22px; display: flex; align-items: center; justify-content: center; }
.sel { background: #c8c6c4; }
.case { width: 32px; gap: 2px; }
.b { font-weight: 700; }
.it { font-family: "Liberation Serif", serif; font-style: italic; font-size: 15px; }
.u { text-decoration: underline; }
.st { text-decoration: line-through; font-size: 12px; }
.xx { font-weight: 600; }
.xx sub, .xx sup { font-size: 8px; line-height: 8px; color: #2b88d8; }
.xx sub { align-self: flex-end; }
.xx sup { align-self: flex-start; }
.sep { width: 10px; height: 24px; background: linear-gradient(#d2d0ce, #d2d0ce) center / 1px 100% no-repeat; }

.gallery { margin: 2px 10px 0 9px; height: 60px; display: flex; background: #fff; border: 1px solid #c8c6c4; }
.gallery > button { flex: 1; min-width: 0; padding: 0 3px; border: 4px solid transparent; display: flex; flex-direction: column; justify-content: space-between; overflow: hidden; }
.gallery .cur { border-color: #c5c5c5; }
.gallery b { width: 100%; height: 30px; line-height: 36px; overflow: hidden; text-align: left; font-weight: 400; font-size: 12px; color: #595959; }
.gallery span { width: 100%; line-height: 16px; text-align: center; }
.gallery em { font-style: normal; color: #1d824c; }
.gallery .s-g { color: #1d824c; font-weight: 600; }
.gallery .s-t { font: 44px/24px "Liberation Serif", serif; }
.gallery .s-h1 { font-family: "Liberation Serif", serif; font-weight: 700; font-size: 19px; color: #262626; }
.gallery .s-h2 { font-weight: 700; font-size: 14px; color: #1d824c; }
.gallery .s-h3 { font-weight: 600; }
.gallery .s-h4 { font-family: "Liberation Serif", serif; font-style: italic; font-size: 16px; color: #0e4025; }
.gallery .s-sr { font-weight: 600; font-variant: small-caps; font-size: 13px; }
.gscroll { width: 15px; display: flex; flex-direction: column; border-left: 1px solid #c8c6c4; }
.gscroll button { flex: 1; display: flex; align-items: center; justify-content: center; border-bottom: 1px solid #d2d0ce; background: #fff; }
.gscroll .dim { background: #f3f2f1; }
.collapse { width: 30px; align-self: flex-end; height: 11px; display: flex; justify-content: center; }

/* workspace */
.work { flex: 1; display: flex; min-height: 0; }
.doc { position: relative; flex: 1; padding: 14px 30px 0; font: 11px/16px Roboto, sans-serif; color: #595959; }
.sheet { position: relative; width: 640px; white-space: nowrap; }
.move { position: absolute; left: 15px; top: 0; }
.cursor { position: absolute; left: 60px; top: 15px; width: 1px; height: 45px; background: #000; }
.sheet header { padding-bottom: 28px; border-bottom: 1px solid #595959; text-align: center; }
.sheet h1 { font: 40px/47px "Liberation Serif", serif; }
.mail { font-weight: 700; color: #1d824c; }
.goal { padding: 25px 0 0 60px; }
.sheet h2 { margin: 19px 0 0 66px; font: 700 17px/24px "Liberation Serif", serif; color: #262626; }
.sheet h2.exp { margin: 25px 0 15px 60px; }
.sheet h2.act { margin-top: 17px; }
.line { margin-left: 59px; padding: 1px 0 0 31px; border-left: 2px dotted #bfbfbf; display: flex; flex-direction: column; gap: 12px; }
.edu { margin-top: 8px; }
.sheet h4 { font-weight: 700; }
.sheet h3 { font-size: 13px; line-height: 21px; }
.sheet h3 b { color: #1d824c; }
.sheet ul { margin: 10px 0 0 66px; width: 520px; display: grid; grid-template-columns: 1fr 1fr; list-style: none; line-height: 18px; }
.sheet li { display: flex; align-items: center; gap: 14px; }
.sheet li::before { content: ""; width: 6px; height: 6px; border-radius: 50%; background: #1d824c; }
.about { padding: 9px 0 0 66px; }
.about u { text-decoration: underline dotted #5b57c8 2px; text-underline-offset: 2px; }
.grip { position: absolute; right: -15px; bottom: -14px; width: 15px; height: 15px; border: 1px solid #999; }

/* resume assistant pane */
.pane { width: 350px; padding: 8px 15px 15px 14px; display: flex; flex-direction: column; background: #e6e6e6; border-left: 1px solid #c6c6c6; }
.pane-head { height: 39px; padding-bottom: 2px; display: flex; align-items: center; color: #666; }
.pane-head h2 { flex: 1; font-size: 20px; font-weight: 300; line-height: 38px; color: #2b4672; }
.pane-head button { width: 42px; height: 32px; padding-bottom: 8px; display: flex; align-items: center; justify-content: center; }
.pane-head button:last-child { width: 20px; margin-left: 10px; }
.pane-head .tri { border-width: 5px 5px 0; }
.card { flex: 1; display: flex; flex-direction: column; padding: 31px 30px 0; background: #2b579a; color: #fff; }
.brand { display: flex; justify-content: space-between; align-items: center; padding-bottom: 65px; }
.brand span { padding-top: 4px; }
.card h3 { font-size: 20px; line-height: 26px; font-weight: 300; }
.lead { margin-top: 10px; font-size: 13px; line-height: 20px; }
.start { height: 32px; margin-top: 81px; border-radius: 16px; background: #fff; color: #2b579a; font-size: 13px; }
.terms { margin: auto 0 15px; text-align: center; color: #d5e0f0; }
.terms a { color: #fff; }
.learn { margin: 0 -30px; height: 60px; padding-bottom: 2px; background: #4b72aa; }

/* status bar */
.status { height: 22px; padding: 0 0 1px 8px; display: flex; align-items: center; gap: 19px; background: #f3f2f1; border-top: 1px solid #c8c6c4; }
.views { margin-left: auto; display: flex; align-items: center; height: 20px; }
.views button { width: 40px; height: 20px; display: flex; align-items: center; justify-content: center; }
.views .focus { width: 59px; gap: 4px; justify-content: flex-start; }
.zoom { display: flex; align-items: center; gap: 5px; padding-left: 4px; font-size: 16px; }
.zoom input { appearance: none; width: 100px; height: 1px; background: #999; }
.zoom input::-webkit-slider-thumb { appearance: none; width: 5px; height: 11px; background: #666; }
.pct { width: 47px; padding-left: 12px; }

/* taskbar */
.taskbar { height: 40px; display: flex; background: #1a2744; color: #fff; }
.startbtn { width: 48px; display: flex; align-items: center; justify-content: center; }
.tsearch { width: 344px; display: flex; align-items: center; gap: 9px; padding-left: 12px; background: #f2f2f2; border: 1px solid #c8c8c8; color: #333; font-size: 14px; }
.tsearch input { flex: 1; }
.apps { display: flex; }
.apps button { width: 49px; display: flex; align-items: center; justify-content: center; }
.apps .run { background: linear-gradient(#76b9ed, #76b9ed) bottom / 40px 2px no-repeat; }
.apps .active { border-bottom: 2px solid #76b9ed; padding-top: 2px; background: #485570; }
.apps .alert { border-bottom: 2px solid #f7630c; padding-top: 2px; background: #a5612f; }
.ps { width: 22px; height: 22px; border-radius: 4px; background: #001e36; color: #31a8ff; font-weight: 700; line-height: 22px; }
.tray { margin-left: auto; display: flex; align-items: center; }
.tray button { width: 24px; height: 40px; display: flex; align-items: center; justify-content: center; }
.tray .wide { width: 32px; }
.clock { width: 66px; text-align: center; line-height: 18px; }
.tray .note { width: 38px; }
.desk { width: 5px; height: 40px; margin-left: 9px; border-left: 1px solid #6a7488; }
```
